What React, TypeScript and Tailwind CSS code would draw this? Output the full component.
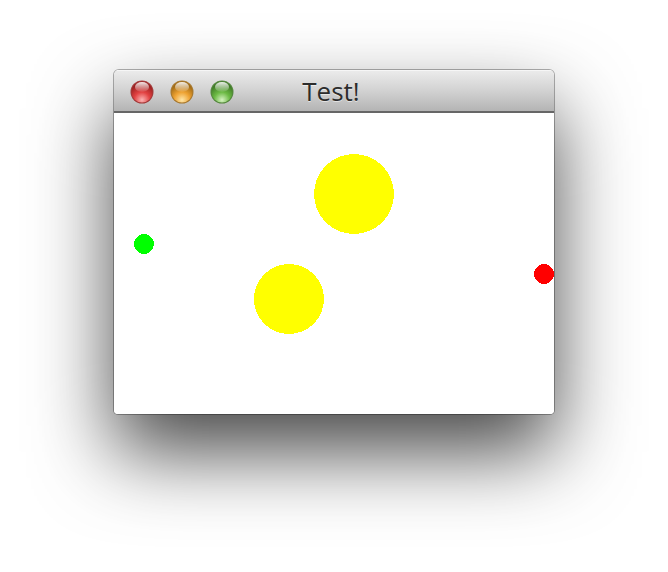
import React from "react";

// Old Aqua-style window ("Test!") holding a Swing-like canvas of ovals.

type Light = { id: string; rim: string; base: string; glow: string };

const lights: Light[] = [
  { id: "close", rim: "#9a2020", base: "#e24242", glow: "#fbb4b4" },
  { id: "min", rim: "#a06a14", base: "#eea232", glow: "#fee6a8" },
  { id: "zoom", rim: "#3f7a26", base: "#6cba44", glow: "#d6f2c2" },
];

function TrafficLight({ light }: { light: Light }) {
  return (
    <svg width="24" height="24" viewBox="0 0 24 24" className="shrink-0">
      <defs>
        <radialGradient id={`f-${light.id}`} cx="50%" cy="88%" r="75%">
          <stop offset="0%" stopColor={light.glow} />
          <stop offset="50%" stopColor={light.base} />
          <stop offset="100%" stopColor={light.rim} />
        </radialGradient>
        <linearGradient id={`h-${light.id}`} x1="0" y1="0" x2="0" y2="1">
          <stop offset="0%" stopColor="#fff" stopOpacity="0.9" />
          <stop offset="100%" stopColor="#fff" stopOpacity="0.05" />
        </linearGradient>
      </defs>
      <circle cx="12" cy="12" r="11.5" fill={light.rim} opacity="0.85" />
      <circle cx="12" cy="12" r="10.5" fill={`url(#f-${light.id})`} />
      <ellipse cx="12" cy="7" rx="7" ry="5" fill={`url(#h-${light.id})`} />
    </svg>
  );
}

// oval positions in canvas coordinates (x, y, size), like fillOval
const ovals = [
  { x: 200, y: 41, d: 80, c: "#ffff00" },
  { x: 20, y: 121, d: 20, c: "#00ff00" },
  { x: 140, y: 151, d: 70, c: "#ffff00" },
  { x: 420, y: 151, d: 20, c: "#ff0000" },
];

export default function App() {
  return (
    <div className="w-[668px] h-[572px] bg-white flex justify-center items-start pt-[70px] overflow-hidden">
      <div className="w-[440px] h-[344px] flex flex-col rounded-t-[5px] rounded-b-[4px] overflow-hidden shadow-[0_38px_80px_rgba(0,0,0,0.72),0_0_0_1px_rgba(0,0,0,0.3)]">
        <div className="h-[43px] shrink-0 relative flex items-start gap-[16px] pl-[16px] pt-[10px] border-b-2 border-[#666666] bg-[linear-gradient(#ececec,#d2d2d2_50%,#b4b4b4)] shadow-[inset_0_1px_0_#f6f6f6]">
          {lights.map((l) => (
            <TrafficLight key={l.id} light={l} />
          ))}
          <div className="absolute inset-x-0 top-[4px] text-center text-[26px] leading-[34px] text-[#2c2c2c] [font-family:'Open_Sans',sans-serif] [text-shadow:0_1px_0_rgba(255,255,255,0.55)] pr-[6px]">
            Test!
          </div>
        </div>
        <div className="flex-1 bg-white">
          <svg width="440" height="301" viewBox="0 0 440 301" shapeRendering="crispEdges">
            {ovals.map((o, i) => (
              <circle key={i} cx={o.x + o.d / 2} cy={o.y + o.d / 2} r={o.d / 2} fill={o.c} />
            ))}
          </svg>
        </div>
      </div>
    </div>
  );
}
